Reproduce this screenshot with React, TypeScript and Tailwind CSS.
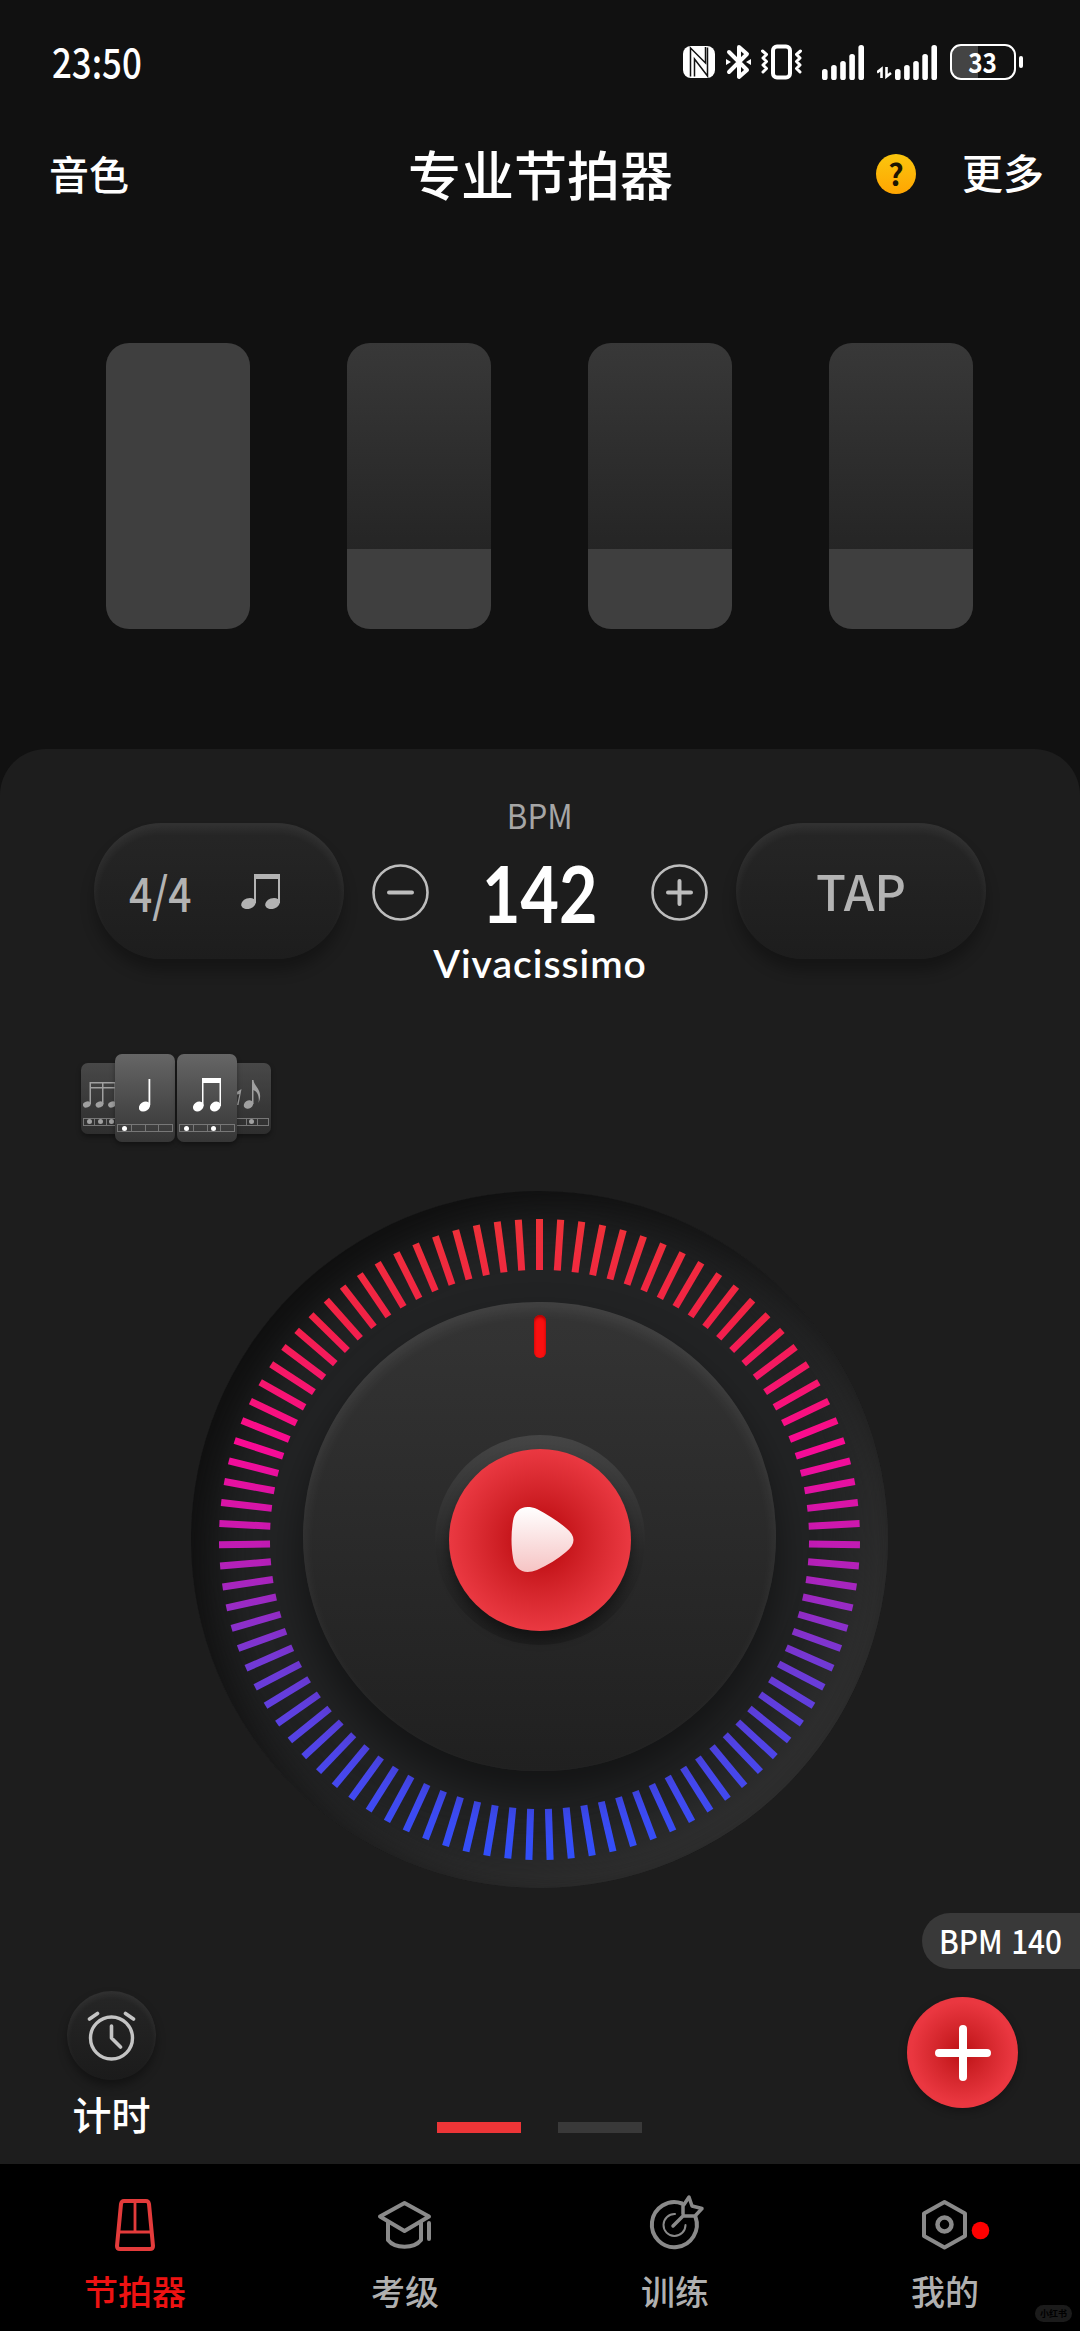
import { clsx } from "clsx";
import type { ReactNode } from "react";

const TICK_COUNT = 95;

function SignalBars() {
  const heights = [11, 15, 19, 26, 35];
  return (
    <svg width="42" height="35" viewBox="0 0 42 35" fill="#fff">
      {heights.map((h, i) => (
        <rect key={h} x={i * 9.1} y={35 - h} width="5.6" height={h} rx="2.6" />
      ))}
    </svg>
  );
}

function StatusBar() {
  return (
    <div className="flex h-[124px] items-center justify-between pl-[52px] pr-[57px]">
      <span className="-mt-1 origin-left scale-x-[0.85] text-[41px] leading-none font-medium">
        23:50
      </span>
      <div className="flex h-[36px] items-center">
        <svg width="32" height="32" viewBox="0 0 32 32" fill="none">
          <rect width="32" height="32" rx="8" fill="#fff" />
          <path
            d="M7.500 30.500V2L22.500 17V1M24.500 1.500V30L11.500 13V30.500"
            stroke="#111"
            strokeWidth="1.500"
          />
        </svg>
        <svg className="ml-[11px]" width="25" height="36" viewBox="0 0 25 36" fill="none">
          <path
            d="M3 8L21 26L13 33V3L21 10L3 28"
            stroke="#fff"
            strokeWidth="4"
            strokeLinejoin="round"
            strokeLinecap="round"
          />
          <path d="M0 15L5 18L0 21ZM25 15L20 18L25 21Z" fill="#fff" />
        </svg>
        <svg className="ml-[10px]" width="42" height="36" viewBox="0 0 42 36" fill="none">
          <rect x="12" y="2.500" width="17" height="31" rx="4" stroke="#fff" strokeWidth="4" />
          <path
            d="M1.500 7L5.500 10.500L2 14L5.500 17.500L2 21L5.500 24.500L2 28M39.500 7L35.500 10.500L39 14L35.500 17.500L39 21L35.500 24.500L39 28"
            stroke="#fff"
            strokeWidth="3"
            strokeLinejoin="round"
            strokeLinecap="round"
          />
        </svg>
        <div className="ml-[19px]">
          <SignalBars />
        </div>
        <svg className="ml-[13px] mt-[21px]" width="16" height="13" viewBox="0 0 16 13" fill="none">
          <path d="M0 6.500L4.500 3V12M9.500 1V10.500L14 7" stroke="#fff" strokeWidth="2.600" />
        </svg>
        <div className="ml-[2px]">
          <SignalBars />
        </div>
        <div className="ml-[13px] flex h-[36px] w-[66px] items-center justify-center rounded-[11px] border-[2.5px] border-white bg-linear-to-r from-[#444] from-42% to-[#111] to-42%">
          <span className="-mt-[2px] scale-x-[0.87] text-[28px] leading-none font-bold">33</span>
        </div>
        <div className="ml-[3px] h-[12px] w-[4px] rounded-full bg-white" />
      </div>
    </div>
  );
}

function Header() {
  return (
    <header className="grid h-[108px] grid-cols-[1fr_auto_1fr] items-center pr-[36px] pl-[49px] leading-none font-medium">
      <span className="-mt-[11px] text-[40px]">音色</span>
      <h1 className="-mt-[9px] -ml-[12px] text-[53px] font-medium">专业节拍器</h1>
      <div className="-mt-[8px] flex items-center justify-end">
        <span className="mr-[46px] flex size-[40px] items-center justify-center rounded-full bg-linear-to-b from-[#fac60e] to-[#ffa502] text-[#1c1502]">
          <span className="-mt-[2px] text-[30px] font-bold">?</span>
        </span>
        <span className="-mt-[6px] text-[41px]">更多</span>
      </div>
    </header>
  );
}

function BeatPad({ full }: { full?: boolean }) {
  return (
    <div className="flex h-[286px] w-[144px] flex-col justify-end overflow-hidden rounded-[23px] bg-linear-to-b from-[#383838] to-[#1e1e1e]">
      <div className={clsx("bg-[#3f3f3f]", full ? "h-full" : "h-[80px]")} />
    </div>
  );
}

function Pill({ children }: { children: ReactNode }) {
  return (
    <button className="mt-[28px] flex h-[136px] w-[250px] items-center justify-center rounded-full bg-linear-to-b from-[#262626] to-[#1d1d1d] text-[#b3b3b3] shadow-[0_12px_14px_rgba(0,0,0,0.28),inset_0_7px_8px_rgba(255,255,255,0.06)]">
      {children}
    </button>
  );
}

function RoundStep({ plus }: { plus?: boolean }) {
  return (
    <button className="mt-[69px]">
      <svg width="57" height="57" viewBox="0 0 57 57" fill="none" stroke="#bdbdbd" strokeLinecap="round">
        <circle cx="28.500" cy="28.500" r="27" strokeWidth="2.600" />
        <path d={plus ? "M17 28.500H40M28.500 17V40" : "M17 28.500H40"} strokeWidth="4" />
      </svg>
    </button>
  );
}

function TempoRow() {
  return (
    <div className="flex h-[206px] items-start justify-center">
      <Pill>
        <span className="-ml-[28px] w-[70px] origin-left scale-x-[0.85] text-[48px] leading-none font-medium whitespace-nowrap">
          4/4
        </span>
        <svg className="mt-[2px] ml-[42px]" width="40" height="36" viewBox="0 0 40 36" fill="#b3b3b3">
          <ellipse cx="7.500" cy="29.500" rx="7.500" ry="5.300" transform="rotate(-20 7.500 29.500)" />
          <ellipse cx="31.500" cy="29.500" rx="7.500" ry="5.300" transform="rotate(-20 31.500 29.500)" />
          <path d="M13 0H39V29H37V5H15V29H13Z" />
        </svg>
      </Pill>
      <div className="ml-[28px]">
        <RoundStep />
      </div>
      <div className="flex w-[222px] flex-col items-center whitespace-nowrap">
        <span className="-mt-[2px] h-[44px] scale-x-[0.92] text-[34px] leading-[44px] text-[#a6a6a6]">BPM</span>
        <span className="mt-[11px] h-[90px] scale-x-[0.84] font-[Lato] text-[79px] leading-[90px] font-bold">
          142
        </span>
        <span className="mt-[1px] h-[48px] font-[Lato] text-[39px] leading-[48px] font-semibold tracking-[1px]">
          Vivacissimo
        </span>
      </div>
      <div className="mr-[28px]">
        <RoundStep plus />
      </div>
      <Pill>
        <span className="-mt-[3px] text-[49px] leading-none font-medium">TAP</span>
      </Pill>
    </div>
  );
}

function BeatStrip({ dots }: { dots: number[] }) {
  return (
    <div className="flex h-[8px] w-full border border-[#777]">
      {[0, 1, 2, 3].map((i) => (
        <div
          key={i}
          className={clsx("flex flex-1 items-center justify-center", i > 0 && "border-l border-[#777]")}
        >
          {dots.includes(i) && <i className="size-[5px] shrink-0 rounded-full bg-current" />}
        </div>
      ))}
    </div>
  );
}

function NoteCard({ back, dots, children }: { back?: boolean; dots: number[]; children: ReactNode }) {
  return (
    <div
      className={clsx(
        "flex shrink-0 flex-col items-center justify-end rounded-[7px] shadow-[0_3px_5px_rgba(0,0,0,0.35)]",
        back
          ? "h-[71px] w-[50px] bg-linear-to-b from-[#484848] to-[#2e2e2e] px-[2px] pb-[8px] text-[#a0a0a0]"
          : "z-10 h-[88px] w-[60px] bg-linear-to-b from-[#666] to-[#363636] px-[2px] pb-[10px] text-white"
      )}
    >
      {children}
      <BeatStrip dots={dots} />
    </div>
  );
}

function NoteCards() {
  return (
    <div className="mt-[53px] flex h-[88px] items-center pl-[81px]">
      <NoteCard back dots={[0, 1, 2]}>
        <svg className="mb-[10px]" width="46" height="26" viewBox="0 0 46 26" fill="currentColor">
          <ellipse cx="3.800" cy="22.500" rx="4" ry="3" transform="rotate(-20 3.800 22.500)" />
          <ellipse cx="16.500" cy="22.500" rx="4" ry="3" transform="rotate(-20 16.500 22.500)" />
          <ellipse cx="29" cy="22.500" rx="4" ry="3" transform="rotate(-20 29 22.500)" />
          <path d="M7 0H46V1.500H7ZM7 5H46V6.500H7ZM6.500 0H8V22H6.500ZM19 0H20.500V22H19ZM31.500 0H33V22H31.500Z" />
        </svg>
      </NoteCard>
      <div className="z-10 -ml-[16px] flex gap-[2px]">
        <NoteCard dots={[0]}>
          <svg className="mb-[12px]" width="12" height="33" viewBox="0 0 12 33" fill="currentColor">
            <ellipse cx="5.500" cy="27.500" rx="6" ry="4.600" transform="rotate(-35 5.500 27.500)" />
            <path d="M9.500 0H11.300V26H9.500Z" />
          </svg>
        </NoteCard>
        <NoteCard dots={[0, 2]}>
          <svg className="mb-[12px]" width="28" height="34" viewBox="0 0 28 34" fill="currentColor">
            <ellipse cx="5.300" cy="28.500" rx="5.600" ry="4.600" transform="rotate(-35 5.300 28.500)" />
            <ellipse cx="22.300" cy="28.500" rx="5.600" ry="4.600" transform="rotate(-35 22.300 28.500)" />
            <path d="M9 0H28V28H26.500V5H10.500V28H9Z" />
          </svg>
        </NoteCard>
      </div>
      <div className="-ml-[16px]">
        <NoteCard back dots={[2]}>
          <svg className="mb-[9px]" width="46" height="29" viewBox="0 0 46 29" fill="currentColor">
            <ellipse cx="25.500" cy="24.500" rx="5" ry="4" transform="rotate(-35 25.500 24.500)" />
            <path d="M29 0H30.500C31 7 41 10 35.500 23C37 14 32.500 11 30.500 10V24H29ZM18.500 9L15.500 25H14L16.500 14L12 15V13Z" />
          </svg>
        </NoteCard>
      </div>
    </div>
  );
}

function Dial() {
  const ticks = Array.from({ length: TICK_COUNT }, (_, i) => {
    const a = (i / TICK_COUNT) * Math.PI * 2;
    const dx = Math.sin(a);
    const dy = -Math.cos(a);
    return { x1: dx * 269.5, y1: dy * 269.5, x2: dx * 320.5, y2: dy * 320.5 };
  });

  return (
    <div className="relative mt-[49px] mr-[1px] flex size-[697px] items-center justify-center self-center rounded-full bg-[#222324] shadow-[inset_20px_20px_46px_#0e0e0e,inset_-26px_-26px_44px_#313131]">
      <svg className="absolute inset-0" width="697" height="697" viewBox="-348.5 -348.5 697 697">
        <defs>
          <linearGradient id="ticks" gradientUnits="userSpaceOnUse" x1="0" y1="-320" x2="0" y2="320">
            <stop offset="0" stopColor="#ee3238" />
            <stop offset="0.16" stopColor="#f22146" />
            <stop offset="0.35" stopColor="#fa0a94" />
            <stop offset="0.5" stopColor="#c51ab2" />
            <stop offset="0.7" stopColor="#6f3ad6" />
            <stop offset="0.85" stopColor="#4a46ea" />
            <stop offset="1" stopColor="#304ffa" />
          </linearGradient>
        </defs>
        {ticks.map((t, i) => (
          <line key={i} {...t} stroke="url(#ticks)" strokeWidth="7" />
        ))}
      </svg>

      <div className="relative flex h-[469px] w-[473px] -translate-y-[3px] items-center justify-center rounded-full bg-linear-to-b from-[#343434] to-[#202020] shadow-[0_22px_36px_2px_rgba(0,0,0,0.42),inset_0_8px_14px_rgba(255,255,255,0.08)]">
        <div className="absolute top-[13px] h-[43px] w-[12px] rounded-full bg-[#fa1010] shadow-[inset_0_2px_3px_#a00]" />
        <div className="flex size-[210px] translate-y-[3px] items-center justify-center rounded-full bg-linear-to-b from-[#454545] via-[#292929] via-55% to-[#1e1e1e]">
          <button className="flex size-[182px] items-center justify-center rounded-full bg-radial from-[#c20f15] from-15% to-[#ea3841] to-70% shadow-[0_8px_12px_rgba(0,0,0,0.4)]">
            <svg className="ml-1" width="64" height="68" viewBox="0 0 64 68">
              <defs>
                <linearGradient id="play" x1="0" y1="0" x2="0" y2="1">
                  <stop offset="0" stopColor="#fff" />
                  <stop offset="1" stopColor="#f6c4c4" />
                </linearGradient>
              </defs>
              <path
                d="M3 15C5 3 14-2 27 3C38 9 48 15 56 22C66 30 66 38 56 46C48 53 38 59 27 64C14 69 5 64 3 52C1 40 1 27 3 15Z"
                fill="url(#play)"
              />
            </svg>
          </button>
        </div>
      </div>
    </div>
  );
}

function PanelFooter() {
  return (
    <div className="grid flex-1 grid-cols-[437px_205px_1fr]">
      <div className="ml-[67px] flex w-[89px] flex-col items-center pt-[103px]">
        <button className="flex size-[89px] shrink-0 items-center justify-center rounded-full bg-linear-to-b from-[#262626] to-[#1b1b1b] shadow-[0_6px_10px_rgba(0,0,0,0.35),inset_0_4px_6px_rgba(255,255,255,0.06)]">
          <svg width="50" height="50" viewBox="0 0 50 50" fill="none" stroke="#c4c4c4" strokeLinecap="round">
            <circle cx="24.500" cy="27" r="21" strokeWidth="3.400" />
            <path d="M24.500 15V27L33.500 36M2.500 8L10.500 2.500M38.500 2.500L46.500 8" strokeWidth="3.600" strokeLinejoin="round" />
          </svg>
        </button>
        <span className="mt-[14px] text-[39px] leading-none font-medium whitespace-nowrap">计时</span>
      </div>

      <div className="flex justify-between pt-[234px]">
        <div className="h-[11px] w-[84px] bg-[#ed3537]" />
        <div className="h-[11px] w-[84px] bg-[#393939]" />
      </div>

      <div className="flex flex-col items-end pt-[25px]">
        <div className="flex h-[56px] w-[158px] items-center rounded-l-full bg-[#393939] pl-[17px]">
          <span className="-mt-[2px] origin-left scale-x-[0.9] text-[33px] leading-none font-medium [word-spacing:2px] whitespace-nowrap">
            BPM 140
          </span>
        </div>
        <button className="mt-[28px] mr-[62px] flex size-[111px] items-center justify-center rounded-full bg-radial from-[#bd0f13] to-[#ea3740] to-65% shadow-[0_3px_8px_rgba(0,0,0,0.3)]">
          <svg width="56" height="56" viewBox="0 0 56 56" stroke="#fff" strokeWidth="8" strokeLinecap="round">
            <path d="M4 28H52M28 4V52" />
          </svg>
        </button>
      </div>
    </div>
  );
}

function NavItem({ label, active, children }: { label: string; active?: boolean; children: ReactNode }) {
  return (
    <a
      className={clsx(
        "flex flex-1 flex-col items-center pt-[30px] text-[34px] leading-none",
        active ? "text-[#ee1212]" : "text-[#b0b0b0]"
      )}
    >
      <svg
        width="60"
        height="60"
        viewBox="0 0 60 60"
        fill="none"
        stroke={active ? "#e33b3b" : "#8a8a8a"}
        strokeWidth="4"
        strokeLinejoin="round"
        strokeLinecap="round"
        className="overflow-visible"
      >
        {children}
      </svg>
      <span className="mt-[20px] font-medium">{label}</span>
    </a>
  );
}

function BottomNav() {
  return (
    <nav className="relative flex h-[167px] bg-black">
      <NavItem label="节拍器" active>
        <path d="M19 7H41Q43.500 7 44 10L48 52Q48 55 45 55H15Q12 55 12 52L16 10Q16.500 7 19 7Z" />
        <path d="M15 38H45M30 8V37" strokeWidth="2.800" strokeLinecap="butt" />
      </NavItem>
      <NavItem label="考级">
        <path d="M29.500 9L54 22.500L29.500 37L5 22.500Z" />
        <path d="M13 28V46C20 55 39 55 46 46V28M54 29V45" />
      </NavItem>
      <NavItem label="训练">
        <path d="M37 9.500A22.500 22.500 0 1 0 50.500 23" />
        <path d="M38 20V12L44 3L47 12L57 14.500L50 22H38L28 32" strokeWidth="3.500" />
        <path d="M30 20A11 11 0 1 0 40.500 31" strokeWidth="2" />
      </NavItem>
      <NavItem label="我的">
        <path d="M29.500 8L50 19.500V42L29.500 53.500L9 42V19.500Z" />
        <circle cx="29.500" cy="30.500" r="7" strokeWidth="4.500" />
        <circle cx="65.500" cy="36.500" r="8.800" fill="#fe0000" stroke="none" />
      </NavItem>
      <span className="absolute right-[8px] bottom-[9px] flex h-[17px] w-[37px] items-center justify-center rounded-full bg-[#1b1b1b] text-[9px] leading-none font-bold text-black">
        小红书
      </span>
    </nav>
  );
}

export default function App() {
  return (
    <div className="flex h-[2331px] w-[1080px] flex-col overflow-hidden bg-[#111] font-['Noto_Sans_CJK_SC',sans-serif] text-white">
      <StatusBar />
      <Header />
      <div className="mt-[111px] flex gap-[97px] pl-[106px]">
        <BeatPad full />
        <BeatPad />
        <BeatPad />
        <BeatPad />
      </div>
      <main className="mt-[120px] flex flex-1 flex-col rounded-t-[46px] bg-[#1d1d1d] pt-[46px]">
        <TempoRow />
        <NoteCards />
        <Dial />
        <PanelFooter />
      </main>
      <BottomNav />
    </div>
  );
}
